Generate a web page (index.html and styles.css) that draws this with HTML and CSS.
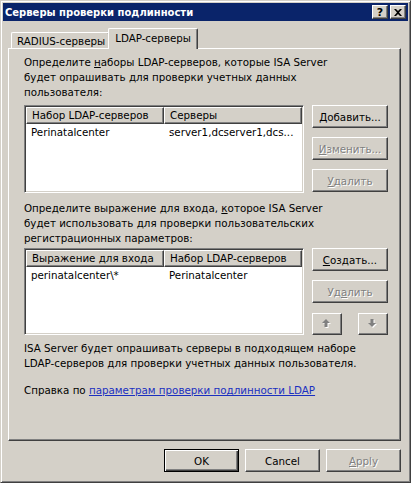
FILE: index.html
```html
<!DOCTYPE html>
<html lang="ru">
<head>
<meta charset="utf-8">
<title>Серверы проверки подлинности</title>
<link rel="stylesheet" href="styles.css">
</head>
<body>
<div class="window">
  <div class="titlebar">
    <span class="title">Серверы проверки подлинности</span>
    <div class="caption-btns">
      <span class="cbtn help">?</span>
      <span class="cbtn close"><svg width="8" height="7" viewBox="0 0 8 7"><path d="M0 0h2l2 2 2-2h2L5 3.5 8 7H6L4 5 2 7H0l3-3.5z" fill="#000"/></svg></span>
    </div>
  </div>
  <div class="body">
    <div class="tabs">
      <div class="tab">RADIUS-серверы</div>
      <div class="tab active">LDAP-серверы</div>
    </div>
    <div class="panel">
      <p class="desc">Определите <u>н</u>аборы LDAP-серверов, которые ISA Server<br>будет опрашивать для проверки учетных данных<br>пользователя:</p>
      <div class="row row1">
        <div class="list">
          <div class="lhead">
            <div class="hcell c1">Набор LDAP-серверов</div>
            <div class="hcell c2">Серверы</div>
          </div>
          <div class="lrow">
            <span class="cell c1">Perinatalcenter</span>
            <span class="cell c2">server1,dcserver1,dcs...</span>
          </div>
        </div>
        <div class="btncol">
          <button class="btn"><u>Д</u>обавить...</button>
          <button class="btn disabled"><u>И</u>зменить...</button>
          <button class="btn disabled"><u>У</u>далить</button>
        </div>
      </div>
      <p class="desc d2">Определите выражение для входа, <u>к</u>оторое ISA Server<br>будет использовать для проверки пользовательских<br>регистрационных параметров:</p>
      <div class="row row2">
        <div class="list">
          <div class="lhead">
            <div class="hcell c1">Выражение для входа</div>
            <div class="hcell c2">Набор LDAP-серверов</div>
          </div>
          <div class="lrow">
            <span class="cell c1">perinatalcenter\*</span>
            <span class="cell c2">Perinatalcenter</span>
          </div>
        </div>
        <div class="btncol col2">
          <button class="btn"><u>С</u>оздать...</button>
          <button class="btn disabled">Уд<u>а</u>лить</button>
          <div class="arrows">
            <button class="btn abtn disabled"><svg width="10" height="10" viewBox="0 0 10 10"><path d="M4 0L8 4H5.5V8h-3V4H0z" fill="#fff" transform="translate(1 1)"/><path d="M4 0L8 4H5.5V8h-3V4H0z" fill="#808080"/></svg></button>
            <button class="btn abtn disabled"><svg width="10" height="10" viewBox="0 0 10 10"><path d="M2.5 0h3v4H8L4 8 0 4h2.5z" fill="#fff" transform="translate(1 1)"/><path d="M2.5 0h3v4H8L4 8 0 4h2.5z" fill="#808080"/></svg></button>
          </div>
        </div>
      </div>
      <p class="desc d3">ISA Server будет опрашивать серверы в подходящем наборе<br>LDAP-серверов для проверки учетных данных пользователя.</p>
      <p class="desc d4">Справка по <a href="#" class="link">параметрам проверки подлинности LDAP</a></p>
    </div>
    <div class="footer">
      <button class="btn fbtn default">OK</button>
      <button class="btn fbtn">Cancel</button>
      <button class="btn fbtn disabled"><u>A</u>pply</button>
    </div>
  </div>
</div>
</body>
</html>
```

FILE: styles.css
```css
html, body {
  margin: 0;
  padding: 0;
  background: #d4d0c8;
}
body {
  font-family: "DejaVu Sans", "Liberation Sans", sans-serif;
  font-size: 10.3px;
  color: #000;
}
.window {
  width: 411px;
  height: 483px;
  box-sizing: border-box;
  background: #d4d0c8;
  border: 1px solid;
  border-color: #d4d0c8 #404040 #404040 #d4d0c8;
  box-shadow: inset 1px 1px #fff, inset -1px -1px #808080;
  padding: 2px;
}
.titlebar {
  height: 18px;
  background: #0a246a;
  display: flex;
  align-items: center;
  justify-content: space-between;
  padding: 0 2px 0 2px;
}
.title {
  color: #fff;
  font-weight: bold;
  font-size: 10px;
}
.caption-btns {
  display: flex;
  gap: 2px;
}
.cbtn {
  width: 16px;
  height: 14px;
  box-sizing: border-box;
  background: #d4d0c8;
  border: 1px solid;
  border-color: #fff #404040 #404040 #fff;
  box-shadow: inset -1px -1px #808080;
  display: flex;
  align-items: center;
  justify-content: center;
  font-weight: bold;
  font-size: 11px;
  line-height: 1;
}
.body {
  padding: 7px 7px 0 5px;
}
.tabs {
  display: flex;
  align-items: flex-end;
  height: 20px;
  padding-left: 3px;
}
.tab {
  height: 16px;
  box-sizing: border-box;
  border: 1px solid;
  border-bottom: none;
  border-color: #fff #404040 #fff #fff;
  box-shadow: inset -1px 0 #808080;
  border-radius: 2px 2px 0 0;
  padding: 1px 4px 0 5px;
  line-height: 14px;
  background: #d4d0c8;
  white-space: nowrap;
}
.tab.active {
  height: 21px;
  margin-left: -2px;
  margin-bottom: -1px;
  padding: 2px 6px 0 6px;
  position: relative;
  z-index: 1;
}
.panel {
  height: 393px;
  box-sizing: border-box;
  border: 1px solid;
  border-color: #fff #404040 #404040 #fff;
  box-shadow: inset -1px -1px #808080;
  padding: 6px 0 0 15px;
}
.desc {
  margin: 0;
  line-height: 15px;
  white-space: nowrap;
}
.row {
  display: flex;
  gap: 8px;
}
.row1 { margin-top: 5px; height: 88px; }
.d2 { margin-top: 8px; }
.row2 { margin-top: 2px; height: 87px; }
.d3 { margin-top: 6px; }
.d4 { margin-top: 12px; }
.list {
  width: 280px;
  box-sizing: border-box;
  background: #fff;
  border: 1px solid;
  border-color: #808080 #fff #fff #808080;
  box-shadow: inset 1px 1px #404040, inset -1px -1px #d4d0c8;
  padding: 1px;
}
.lhead {
  display: flex;
  height: 17px;
}
.hcell {
  box-sizing: border-box;
  height: 17px;
  background: #d4d0c8;
  border: 1px solid;
  border-color: #fff #404040 #404040 #fff;
  box-shadow: inset -1px -1px #808080;
  padding: 0 5px;
  line-height: 15px;
  white-space: nowrap;
  overflow: hidden;
}
.c1 { width: 138px; }
.c2 { flex: 1; }
.lrow {
  display: flex;
  height: 16px;
  line-height: 16px;
}
.cell {
  box-sizing: border-box;
  padding-left: 5px;
  white-space: nowrap;
}
.lrow .c1 { width: 138px; flex: none; }
.btncol {
  display: flex;
  flex-direction: column;
  gap: 9px;
  width: 76px;
}
.btn {
  font-family: inherit;
  font-size: 10.3px;
  color: #000;
  height: 23px;
  margin: 0;
  padding: 0;
  box-sizing: border-box;
  background: #d4d0c8;
  border: 1px solid;
  border-color: #fff #404040 #404040 #fff;
  box-shadow: inset -1px -1px #808080;
  border-radius: 0;
  display: flex;
  align-items: center;
  justify-content: center;
}
.btn.disabled {
  color: #808080;
  text-shadow: 1px 1px #fff;
}
.arrows {
  display: flex;
  justify-content: space-between;
  margin-top: 1px;
}
.abtn {
  width: 30px;
  height: 22px;
}
.link {
  color: #1a2fc0;
  text-decoration: underline;
}
.footer {
  display: flex;
  justify-content: flex-end;
  gap: 6px;
  padding-top: 8px;
}
.fbtn {
  width: 75px;
  height: 23px;
}
.fbtn.default {
  border-color: #000;
  box-shadow: inset 1px 1px #fff, inset -1px -1px #404040, inset -2px -2px #808080;
}
```
